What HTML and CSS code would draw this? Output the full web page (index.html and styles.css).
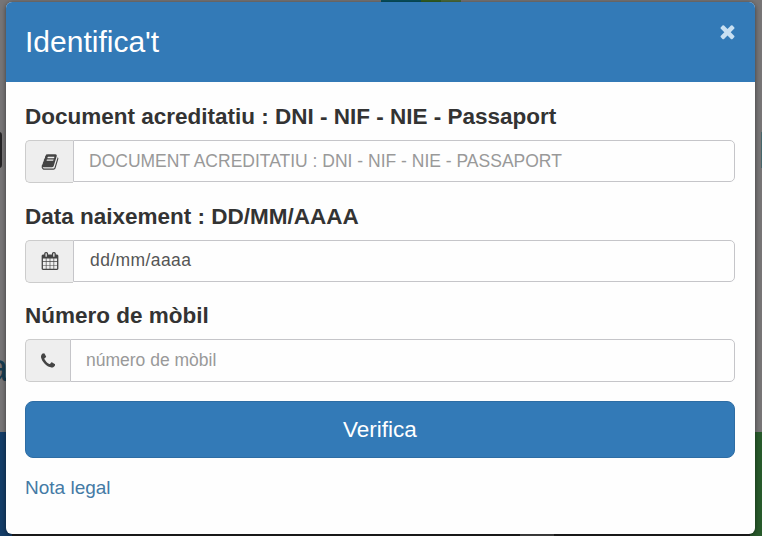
FILE: index.html
```
<!DOCTYPE html>
<html lang="ca">
  <head>
    <meta charset="utf-8" />
    <title>Identifica't</title>
    <link rel="stylesheet" href="styles.css">
  </head>
  <body>
    <div class="page">
      <div class="logo"></div>
      <div class="tab tab-left"></div>
      <div class="tab tab-right"></div>
      <div class="word">a</div>
      <div class="band"></div>
    </div>

    <div class="modal">
      <div class="modal-header">
        <h4 class="modal-title">Identifica't</h4>
        <button type="button" class="close" aria-label="Tanca">
          <svg viewBox="0 0 1792 1792"><path d="M1490 1322q0 40-28 68l-136 136q-28 28-68 28t-68-28l-294-294-294 294q-28 28-68 28t-68-28l-136-136q-28-28-28-68t28-68l294-294-294-294q-28-28-28-68t28-68l136-136q28-28 68-28t68 28l294 294 294-294q28-28 68-28t68 28l136 136q28 28 28 68t-28 68l-294 294 294 294q28 28 28 68z"/></svg>
        </button>
      </div>
      <form class="modal-body">
        <div class="form-group">
          <label for="document">Document acreditatiu : DNI - NIF - NIE - Passaport</label>
          <div class="input-group">
            <span class="addon">
              <svg viewBox="0 0 1792 1792"><path d="M1703 478q40 57 18 129l-275 906q-19 64-76.500 107.500t-122.500 43.500h-923q-77 0-148.500-53.500t-99.500-131.500q-24-67-2-127 0-4 3-27t4-37q1-8-3-21.500t-3-19.500q2-11 8-21t16.500-23.500 16.500-23.500q23-38 45-91.500t30-91.500q3-10 .5-30t-.5-28q3-11 17-28t17-23q21-36 42-92t25-90q1-9-2.500-32t.5-28q4-13 22-30.500t22-22.500q19-26 42.500-84.500t27.500-96.500q1-8-3-25.500t-2-26.500q2-8 9-18t18-23 17-21q8-12 16.500-30.500t15-35 16-36 19.500-32 26.500-23.500 36-11.500 47.500 5.500l-1 3q38-9 51-9h761q74 0 114 56t18 130l-274 906q-36 119-71.500 153.500t-128.500 34.500h-869q-27 0-38 15-11 16-1 43 24 70 144 70h923q29 0 56-15.500t35-41.500l300-987q7-22 5-57 38 15 59 43zm-1064 2q-4 13 2 22.500t20 9.500h608q13 0 25.500-9.500t16.500-22.500l21-64q4-13-2-22.500t-20-9.500h-608q-13 0-25.500 9.500t-16.500 22.500zm-83 256q-4 13 2 22.500t20 9.500h608q13 0 25.500-9.500t16.500-22.500l21-64q4-13-2-22.500t-20-9.500h-608q-13 0-25.500 9.500t-16.500 22.500z"/></svg>
            </span>
            <input type="text" id="document" class="control" placeholder="DOCUMENT ACREDITATIU : DNI - NIF - NIE - PASSAPORT" />
          </div>
        </div>
        <div class="form-group">
          <label for="naixement">Data naixement : DD/MM/AAAA</label>
          <div class="input-group">
            <span class="addon">
              <svg viewBox="0 0 1792 1792"><path d="M192 1664h288v-288h-288v288zm352 0h320v-288h-320v288zm-352-352h288v-320h-288v320zm352 0h320v-320h-320v320zm-352-384h288v-288h-288v288zm736 736h320v-288h-320v288zm-384-736h320v-288h-320v288zm768 736h288v-288h-288v288zm-384-352h320v-320h-320v320zm-352-864v-288q0-13-9.500-22.500t-22.500-9.500h-64q-13 0-22.500 9.500t-9.500 22.500v288q0 13 9.500 22.500t22.500 9.500h64q13 0 22.500-9.500t9.500-22.500zm736 864h288v-320h-288v320zm-384-384h320v-288h-320v288zm384 0h288v-288h-288v288zm32-480v-288q0-13-9.500-22.500t-22.500-9.500h-64q-13 0-22.500 9.500t-9.500 22.500v288q0 13 9.500 22.500t22.500 9.500h64q13 0 22.500-9.500t9.500-22.500zm384-64v1280q0 52-38 90t-90 38h-1408q-52 0-90-38t-38-90v-1280q0-52 38-90t90-38h128v-96q0-66 47-113t113-47h64q66 0 113 47t47 113v96h384v-96q0-66 47-113t113-47h64q66 0 113 47t47 113v96h128q52 0 90 38t38 90z"/></svg>
            </span>
            <input type="text" id="naixement" class="control date" placeholder="dd/mm/aaaa" />
          </div>
        </div>
        <div class="form-group">
          <label for="mobil">Número de mòbil</label>
          <div class="input-group">
            <span class="addon phone">
              <svg viewBox="192 0 1408 1792"><path d="M1600 1240q0 27-10 70.500t-21 68.500q-21 50-122 106-94 51-186 51-27 0-53-3.500t-57.500-12.500-47-14.500-55.500-20.500-49-18q-98-35-175-83-127-79-264-216t-216-264q-48-77-83-175-3-9-18-49t-20.500-55.500-14.500-47-12.500-57.500-3.500-53q0-92 51-186 56-101 106-122 25-11 68.500-21t70.500-10q14 0 21 3 18 6 53 76 11 19 30 54t35 63.500 31 53.500q3 4 17.500 25t21.500 35.500 7 28.500q0 20-28.500 50t-62 55-62 53-28.500 46q0 9 5 22.500t8.500 20.500 14 24 11.500 19q76 137 174 235t235 174q2 1 19 11.500t24 14 20.500 8.500 22.500 5q18 0 46-28.500t53-62 55-62 50-28.500q14 0 28.500 7t35.500 21.500 25 17.500q25 15 53.500 31t63.500 35 54 30q70 35 76 53 3 7 3 21z"/></svg>
            </span>
            <input type="text" id="mobil" class="control" placeholder="número de mòbil" />
          </div>
        </div>
        <button type="button" class="btn">Verifica</button>
        <a class="legal" href="#">Nota legal</a>
      </form>
    </div>
  </body>
</html>
```
FILE: styles.css
```
* {
  box-sizing: border-box;
}
body {
  margin: 0;
  height: 536px;
  overflow: hidden;
  padding: 2px 7px 2px 6px;
  background-color: #777576;
  font-family: "Liberation Sans", Arial, sans-serif;
  color: #333;
}

/* page behind the dialog */
.page {
  position: absolute;
  inset: 0;
  overflow: hidden;
}
.logo {
  position: absolute;
  left: 381px;
  top: 0;
  width: 80px;
  height: 3px;
  background: linear-gradient(to right, #07505f 40px, #315f24 40px, #315f24 60px, #4b6b3b 60px);
}
.tab {
  position: absolute;
  top: 132px;
  width: 10px;
  height: 36px;
}
.tab-left {
  left: -8px;
  border-radius: 3px;
  background-color: #252426;
}
.tab-right {
  left: 761px;
  background-color: #46666b;
}
.word {
  position: absolute;
  left: -13px;
  top: 344px;
  font-size: 38px;
  line-height: 48px;
  color: #173c50;
}
.band {
  position: absolute;
  left: 0;
  right: 0;
  top: 432px;
  bottom: 0;
  background: linear-gradient(to right, #143d68 12px, #222 12px, #222 520px, #4c4c4c 520px, #4c4c4c 554px, #222 554px, #222 750px, #285a2b 750px);
}

.modal {
  position: relative;
  height: 532px;
  border-radius: 6px;
  overflow: hidden;
  background-color: #fefefe;
  box-shadow: 0 1px 5px rgba(0, 0, 0, 0.5);
}
.modal-header {
  display: flex;
  justify-content: space-between;
  align-items: flex-start;
  height: 80px;
  padding: 19px 17px 0 19px;
  background-color: #337ab7;
  color: #fff;
}
.modal-title {
  margin: 0;
  font-size: 30px;
  font-weight: normal;
  line-height: 41px;
}
.close {
  display: flex;
  padding: 0;
  border: 0;
  background: none;
}
.close svg {
  width: 21px;
  height: 21px;
  fill: #c9e0f2;
}
.modal-body {
  padding: 19px 20px 0 19px;
}
.form-group {
  margin-bottom: 17.5px;
}
label {
  display: block;
  margin-bottom: 7px;
  font-size: 22.5px;
  font-weight: bold;
  line-height: 32px;
}
.input-group {
  display: flex;
  height: 43px;
}
.addon {
  display: flex;
  justify-content: center;
  align-items: center;
  width: 48px;
  border: 1px solid #ccc;
  border-right: 0;
  border-radius: 5px 0 0 5px;
  background-color: #eee;
}
.addon svg {
  height: 18px;
  fill: #444;
}
.addon.phone {
  width: 45px;
}
.control {
  flex: 1;
  min-width: 0;
  height: 42px;
  padding: 0 15px;
  border: 1px solid #c5c5c9;
  border-radius: 0 5px 5px 0;
  background-color: #fefefe;
  font-family: inherit;
  font-size: 17.5px;
  color: #555;
}
.phone + .control {
  height: 43px;
}
.control::placeholder {
  color: #999;
}
.date {
  padding-left: 16px;
  letter-spacing: 0.4px;
}
.date::placeholder {
  color: #555;
}
.btn {
  display: block;
  width: 100%;
  height: 57px;
  margin-top: 19px;
  border: 1px solid #2e6da4;
  border-radius: 8px;
  background-color: #337ab7;
  color: #fff;
  font-family: inherit;
  font-size: 22.5px;
}
.legal {
  display: inline-block;
  margin-top: 18px;
  font-size: 19px;
  line-height: 24px;
  color: #447aa5;
  text-decoration: none;
}
```
